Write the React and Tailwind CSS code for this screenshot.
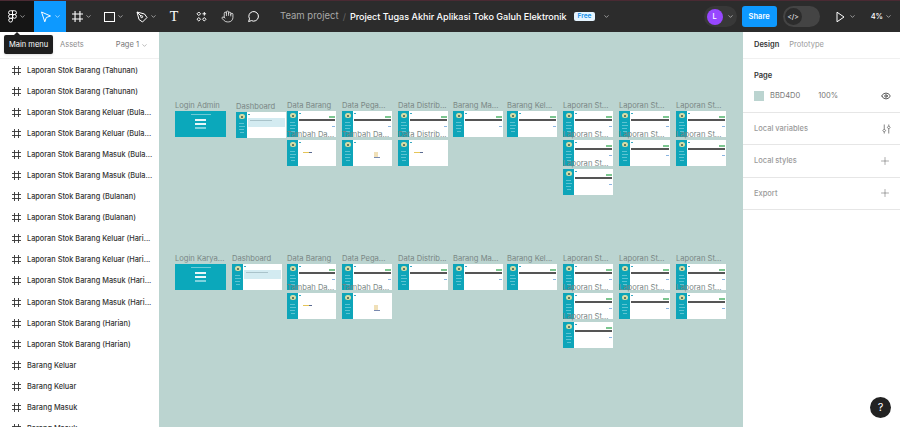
import { ChevronDown, Eye, Hand, Plus } from "lucide-react";

const layers = [
  "Laporan Stok Barang (Tahunan)",
  "Laporan Stok Barang (Tahunan)",
  "Laporan Stok Barang Keluar (Bula...",
  "Laporan Stok Barang Keluar (Bula...",
  "Laporan Stok Barang Masuk (Bula...",
  "Laporan Stok Barang Masuk (Bula...",
  "Laporan Stok Barang (Bulanan)",
  "Laporan Stok Barang (Bulanan)",
  "Laporan Stok Barang Keluar (Hari...",
  "Laporan Stok Barang Keluar (Hari...",
  "Laporan Stok Barang Masuk (Hari...",
  "Laporan Stok Barang Masuk (Hari...",
  "Laporan Stok Barang (Harian)",
  "Laporan Stok Barang (Harian)",
  "Barang Keluar",
  "Barang Keluar",
  "Barang Masuk",
  "Barang Masuk",
];

// frames sit on a free canvas, coordinates are relative to the canvas
const frames = [
  { x: 16, y: 79, w: 51, label: "Login Admin", kind: "login" },
  { x: 77, y: 80, w: 50, label: "Dashboard", kind: "dash" },
  { x: 128, y: 79, w: 49, label: "Data Barang", kind: "table" },
  { x: 128, y: 108, w: 49, label: "Tambah Da...", kind: "form" },
  { x: 183, y: 79, w: 50, label: "Data Pega...", kind: "table" },
  { x: 183, y: 108, w: 50, label: "Tambah Da...", kind: "form2" },
  { x: 239, y: 79, w: 50, label: "Data Distrib...", kind: "table" },
  { x: 239, y: 108, w: 50, label: "Data Distrib...", kind: "form" },
  { x: 294, y: 79, w: 50, label: "Barang Ma...", kind: "table" },
  { x: 348, y: 79, w: 50, label: "Barang Kel...", kind: "table" },
  { x: 404, y: 79, w: 50, label: "Laporan St...", kind: "report" },
  { x: 404, y: 108, w: 50, label: "Laporan St...", kind: "report" },
  { x: 404, y: 137, w: 50, label: "Laporan St...", kind: "report" },
  { x: 460, y: 79, w: 51, label: "Laporan St...", kind: "report" },
  { x: 460, y: 108, w: 51, label: "Laporan St...", kind: "report" },
  { x: 517, y: 79, w: 50, label: "Laporan St...", kind: "report" },
  { x: 517, y: 108, w: 50, label: "Laporan St...", kind: "report" },
  { x: 16, y: 232, w: 51, label: "Login Karya...", kind: "login" },
  { x: 73, y: 232, w: 50, label: "Dashboard", kind: "dash" },
  { x: 128, y: 232, w: 49, label: "Data Barang", kind: "table" },
  { x: 128, y: 261, w: 49, label: "Tambah Da...", kind: "form" },
  { x: 183, y: 232, w: 50, label: "Data Pega...", kind: "table" },
  { x: 183, y: 261, w: 50, label: "Tambah Da...", kind: "form2" },
  { x: 239, y: 232, w: 50, label: "Data Distrib...", kind: "table" },
  { x: 294, y: 232, w: 50, label: "Barang Ma...", kind: "table" },
  { x: 348, y: 232, w: 50, label: "Barang Kel...", kind: "table" },
  { x: 404, y: 232, w: 50, label: "Laporan St...", kind: "report" },
  { x: 404, y: 261, w: 50, label: "Laporan St...", kind: "report" },
  { x: 404, y: 290, w: 50, label: "Laporan St...", kind: "report" },
  { x: 460, y: 232, w: 51, label: "Laporan St...", kind: "report" },
  { x: 460, y: 261, w: 51, label: "Laporan St...", kind: "report" },
  { x: 517, y: 232, w: 50, label: "Laporan St...", kind: "report" },
  { x: 517, y: 261, w: 50, label: "Laporan St...", kind: "report" },
];

function FrameIcon({ size = 9, className = "" }) {
  return (
    <svg width={size} height={size} viewBox="0 0 9 9" className={className} fill="none" stroke="currentColor" strokeWidth="0.9">
      <path d="M2.5 0v9M6.5 0v9M0 2.5h9M0 6.5h9" />
    </svg>
  );
}

function Caret({ className = "text-[#e6e6e6]" }) {
  return <ChevronDown size={7} strokeWidth={2} className={`shrink-0 ${className}`} />;
}

function FigmaLogo() {
  return (
    <svg width="9" height="13" viewBox="0 0 10 14" fill="none" stroke="white" strokeWidth="1.1">
      <path d="M5 .6H2.7a2.1 2.1 0 0 0 0 4.2H5zM5 .6h2.3a2.1 2.1 0 0 1 0 4.2H5zM5 4.8H2.7a2.1 2.1 0 0 0 0 4.2H5z" />
      <circle cx="7.2" cy="6.9" r="2.1" />
      <path d="M5 9H2.7a2.1 2.1 0 1 0 2.3 2.1z" />
    </svg>
  );
}

function MiniSidebar() {
  return (
    <div className="flex h-full w-[11px] shrink-0 flex-col items-center gap-[2px] bg-[#0ea5b9] pt-[2px]">
      <div className="mb-[2px] flex h-[5px] w-[6px] items-center justify-center rounded-full bg-[#d5dca6]">
        <div className="h-[2px] w-[2px] rounded-full bg-[#3f5a4a]" />
      </div>
      <div className="h-[1px] w-[5px] bg-[#5cc4d2]" />
      <div className="h-[1px] w-[6px] bg-[#5cc4d2]" />
      <div className="h-[1px] w-[5px] bg-[#5cc4d2]" />
      <div className="h-[1px] w-[4px] bg-[#5cc4d2]" />
    </div>
  );
}

function FrameBody({ kind }) {
  if (kind === "login") {
    return (
      <div className="flex h-full flex-col items-center bg-[#0ba8bb] pt-[3px]">
        <div className="h-[1px] w-[20px] bg-[#6fcbd7]" />
        <div className="mt-[4px] h-[2px] w-[11px] bg-[#e8f7f9]" />
        <div className="mt-[2px] h-[2px] w-[11px] bg-[#e8f7f9]" />
        <div className="mt-[2px] h-[2px] w-[11px] bg-[#7fd3de]" />
      </div>
    );
  }
  return (
    <div className="flex h-full bg-white">
      <MiniSidebar />
      <div className="flex min-w-0 flex-1 flex-col px-[1px] pt-[2px]">
        <div className="h-[1px] w-[2px] bg-[#3aa8c0]" />
        {kind === "dash" && (
          <div className="mt-[3px] h-[9px] w-full bg-[#d3ebf1] p-[2px]">
            <div className="h-[1px] w-[22px] bg-[#a9c3ca]" />
          </div>
        )}
        {(kind === "table" || kind === "report") && (
          <>
            <div className="mt-[2px] flex justify-end">
              <div className="h-[2px] w-[6px] bg-[#7cc690]" />
            </div>
            <div className="mt-[1px] h-[1.5px] w-full bg-[#555]" />
            <div className="mt-[5px] flex justify-end">
              <div className="h-[1px] w-[3px] bg-[#8ab4e0]" />
            </div>
          </>
        )}
        {kind === "form" && (
          <div className="mt-[9px] ml-[4px] flex">
            <div className="h-[1px] w-[6px] bg-[#e5c558]" />
            <div className="h-[1px] w-[3px] bg-[#5a6a90]" />
          </div>
        )}
        {kind === "form2" && (
          <div className="mt-[9px] ml-[20px]">
            <div className="h-[5px] w-[4px] bg-[#f0e0b8]" />
            <div className="h-[1px] w-[6px] bg-[#7a8ab0]" />
          </div>
        )}
      </div>
    </div>
  );
}

function CanvasFrame({ x, y, w, label, kind }) {
  return (
    <>
      <div className="absolute h-[26px]" style={{ left: x, top: y, width: w }}>
        <FrameBody kind={kind} />
      </div>
      <div className="absolute text-[7.6px] leading-[10px] whitespace-nowrap text-[#7a8785]" style={{ left: x, top: y - 10 }}>
        {label}
      </div>
    </>
  );
}

function ToolBar() {
  return (
    <header className="flex h-[32px] shrink-0 items-center border-t border-[#4a2a33] bg-[#2c2c2c] text-white">
      <div className="flex h-full w-[34px] items-center justify-center gap-[2px] bg-[#151515]">
        <FigmaLogo />
        <Caret />
      </div>
      <div className="flex h-full w-[32px] items-center justify-center gap-[2px] bg-[#0d99ff]">
        <svg width="12" height="12" viewBox="0 0 12 12" fill="none" stroke="white" strokeWidth="1">
          <path d="M1.5 1 10.5 5 6.3 6.5 4.8 10.8z" />
        </svg>
        <Caret className="text-white" />
      </div>
      <div className="flex w-[32px] items-center justify-center gap-[2px]">
        <FrameIcon size={11} />
        <Caret />
      </div>
      <div className="flex w-[32px] items-center justify-center gap-[2px]">
        <div className="h-[10px] w-[11px] border border-white" />
        <Caret />
      </div>
      <div className="flex w-[32px] items-center justify-center gap-[2px]">
        <svg width="12" height="12" viewBox="0 0 12 12" fill="none" stroke="white" strokeWidth="1">
          <path d="M1 1 8.5 3 11 6.5 6.5 11 3 8.5zM1 1l4 4" />
          <circle cx="5.7" cy="5.7" r="1" />
        </svg>
        <Caret />
      </div>
      <div className="flex w-[24px] items-center justify-center font-['Liberation_Serif',serif] text-[14px] leading-none">T</div>
      <div className="flex w-[30px] items-center justify-center">
        <svg width="11" height="11" viewBox="0 0 11 11" fill="none" stroke="white" strokeWidth="1">
          <path d="M1 2.8 2.8 1 4.6 2.8 2.8 4.6zM1 8.3 2.8 6.5 4.6 8.3 2.8 10zM6.5 8.3 8.3 6.5 10 8.3 8.3 10zM8.3 1v3.6M6.5 2.8h3.6" />
        </svg>
      </div>
      <div className="flex w-[22px] items-center justify-center">
        <Hand size={13} strokeWidth={1.4} />
      </div>
      <div className="flex w-[30px] items-center justify-center">
        <svg width="13" height="13" viewBox="0 0 13 13" fill="none" stroke="white" strokeWidth="1">
          <path d="M1.6 11.6 2.5 8.8A4.8 4.8 0 1 1 4.4 10.6z" />
        </svg>
      </div>
      <div className="ml-[12px] flex items-center whitespace-nowrap">
        <span className="text-[9.5px] text-[#a8a8a8]">Team project</span>
        <span className="mx-[4px] text-[9px] text-[#666]">/</span>
        <span className="text-[9.05px] font-medium text-white">Project Tugas Akhir Aplikasi Toko Galuh Elektronik</span>
        <span className="mr-[8px] ml-[7px] rounded-[2px] bg-[#e5f4ff] px-[4px] text-[6.5px] leading-[9px] font-semibold text-[#0d8ce9]">Free</span>
        <Caret />
      </div>
      <div className="ml-auto flex items-center">
        <div className="flex h-[21px] w-[33px] items-center justify-center gap-[4px] rounded-full bg-[#383838]">
          <div className="flex h-[16px] w-[16px] items-center justify-center rounded-full bg-[#9747ff] text-[7.5px] font-medium">L</div>
          <Caret />
        </div>
        <div className="ml-[5px] flex h-[21px] w-[35px] items-center justify-center rounded-[3px] bg-[#0d99ff] text-[7.5px] font-semibold">Share</div>
        <div className="ml-[6px] flex h-[21px] w-[37px] items-center rounded-full bg-[#444] pl-[2px]">
          <div className="flex h-[17px] w-[17px] items-center justify-center rounded-full bg-[#2c2c2c] text-[7px] leading-none">&lt;/&gt;</div>
        </div>
        <div className="ml-[16px] flex items-center gap-[4px]">
          <svg width="9" height="12" viewBox="0 0 9 12" fill="none" stroke="white" strokeWidth="1">
            <path d="M1 1.2 8 6 1 10.8z" />
          </svg>
          <Caret />
        </div>
        <div className="mr-[8px] ml-[15px] flex items-center gap-[2px] text-[7.5px] font-medium">
          4%
          <Caret />
        </div>
      </div>
    </header>
  );
}

function LayersPanel() {
  return (
    <aside className="relative flex h-full w-[159px] shrink-0 flex-col bg-white">
      <div className="flex h-[27px] shrink-0 items-center justify-end border-b border-[#f0f0f0] pr-[11px] text-[7.5px] text-[#8c8c8c]">
        <span className="mr-auto ml-[60px]">Assets</span>
        <span className="mr-[2px] text-[#777]">Page 1</span>
        <ChevronDown size={7} />
      </div>
      <ul className="overflow-hidden pt-[1px]">
        {layers.map((name, i) => (
          <li key={i} className="flex h-[21.05px] items-center pl-[12px] text-[7.35px] font-medium whitespace-nowrap text-[#333]">
            <FrameIcon className="mr-[6px] shrink-0 text-[#333]" />
            {name}
          </li>
        ))}
      </ul>
      <div className="absolute top-[3px] left-[4px] flex h-[19px] items-center rounded-[2px] bg-[#1e1e1e] px-[5px] text-[7.5px] text-white shadow">
        Main menu
        <div className="absolute -top-[3px] left-[10px] h-0 w-0 border-x-[3px] border-b-[3px] border-x-transparent border-b-[#1e1e1e]" />
      </div>
    </aside>
  );
}

function Section({ label, children }) {
  return (
    <div className="flex h-[32.4px] items-center justify-between border-b border-[#e6e6e6] pr-[9px] pl-[11px] text-[7.5px] font-medium text-[#9a9a9a]">
      {label}
      {children}
    </div>
  );
}

function RightPanel() {
  return (
    <aside className="h-full w-[157px] shrink-0 bg-white">
      <div className="flex h-[27px] items-center gap-[10px] border-b border-[#f0f0f0] pl-[11px] text-[7.5px]">
        <span className="font-semibold text-[#333]">Design</span>
        <span className="text-[#9a9a9a]">Prototype</span>
      </div>
      <div className="h-[54px] border-b border-[#e6e6e6] pt-[11px] pr-[9px] pl-[11px]">
        <div className="text-[7.5px] font-semibold text-[#333]">Page</div>
        <div className="mt-[9px] flex items-center text-[7.5px] text-[#777]">
          <div className="h-[10px] w-[10px] bg-[#bbd4d0]" />
          <span className="ml-[6px]">BBD4D0</span>
          <span className="ml-[18px]">100%</span>
          <Eye size={10} strokeWidth={1.8} className="ml-auto text-[#222]" />
        </div>
      </div>
      <Section label="Local variables">
        <svg width="9" height="12" viewBox="0 0 10 11" fill="none" stroke="#555" strokeWidth="0.8">
          <path d="M2.5.5v5M2.5 9v1.5M7.5.5V2M7.5 5.5v5" />
          <path d="M2.5 5.5 4 7.2 2.5 9 1 7.2zM7.5 2 9 3.7 7.5 5.5 6 3.7z" />
        </svg>
      </Section>
      <Section label="Local styles">
        <Plus size={12} strokeWidth={1} className="text-[#555]" />
      </Section>
      <Section label="Export">
        <Plus size={12} strokeWidth={1} className="text-[#555]" />
      </Section>
    </aside>
  );
}

export default function App() {
  return (
    <div className="relative flex h-[427px] w-[900px] flex-col overflow-hidden font-['Inter',sans-serif]">
      <ToolBar />
      <div className="flex min-h-0 flex-1">
        <LayersPanel />
        <main className="relative h-full flex-1 overflow-hidden bg-[#bbd4d0]">
          {frames.map((f, i) => (
            <CanvasFrame key={i} {...f} />
          ))}
        </main>
        <RightPanel />
      </div>
      <div className="absolute right-[9px] bottom-[9px] flex h-[21px] w-[21px] items-center justify-center rounded-full bg-[#222] text-[11px] text-white">?</div>
    </div>
  );
}
